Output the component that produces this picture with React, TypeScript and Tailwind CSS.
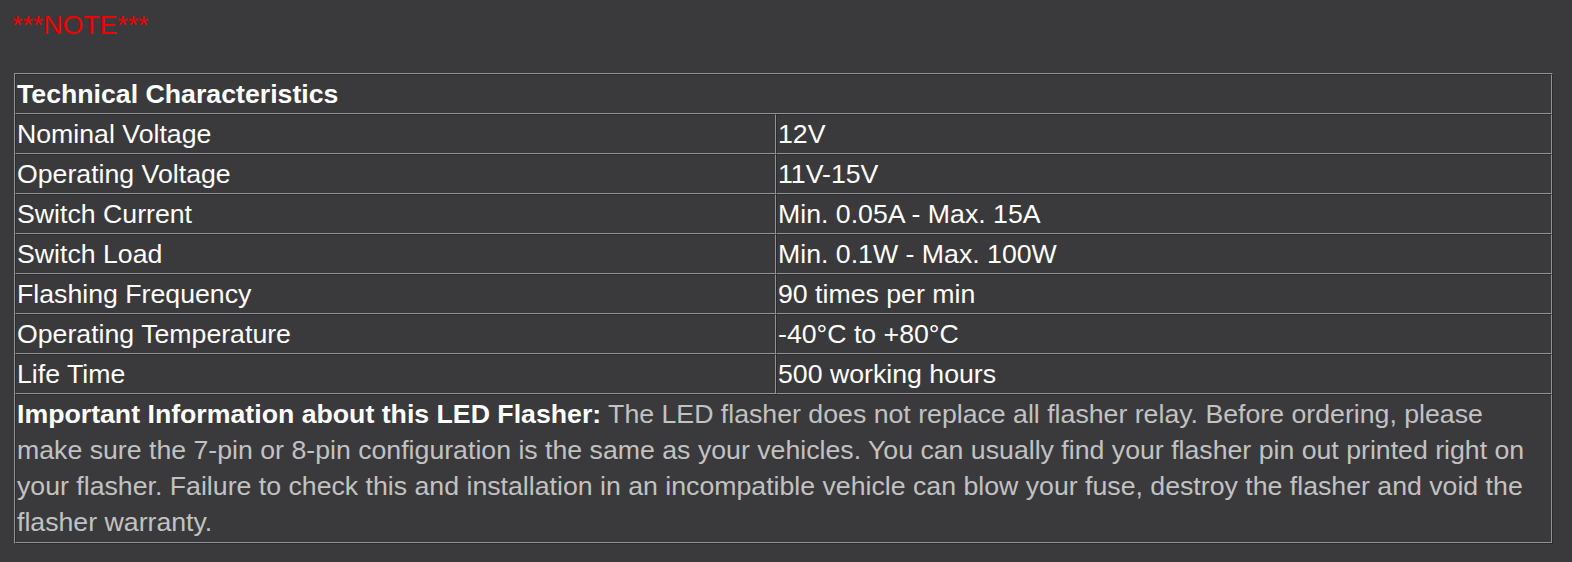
export default function App() {
  const rows: [string, string][] = [
    ["Nominal Voltage", "12V"],
    ["Operating Voltage", "11V-15V"],
    ["Switch Current", "Min. 0.05A - Max. 15A"],
    ["Switch Load", "Min. 0.1W - Max. 100W"],
    ["Flashing Frequency", "90 times per min"],
    ["Operating Temperature", "-40°C to +80°C"],
    ["Life Time", "500 working hours"],
  ]

  // inset cell borders: dark top/left, light bottom/right
  const cell =
    "border border-t-[#2b2b2d] border-l-[#2b2b2d] border-b-[#929292] border-r-[#929292] p-px align-middle"

  return (
    <div
      className="min-h-[562px] bg-[#3a3a3c] pl-[12px] pt-[7px] text-[26.7px] leading-[36px]"
      style={{ fontFamily: '"Liberation Sans", Arial, sans-serif' }}
    >
      <p className="text-[#f00000]">***NOTE***</p>

      <table className="ml-[2px] mt-[30px] w-[1539px] table-fixed border-separate border-spacing-0 border border-t-[#929292] border-l-[#929292] border-b-[#2b2b2d] border-r-[#2b2b2d]">
        <colgroup>
          <col className="w-[761px]" />
          <col />
        </colgroup>
        <tbody>
          <tr>
            <td colSpan={2} className={`${cell} font-bold text-white`}>
              Technical Characteristics
            </td>
          </tr>
          {rows.map(([label, value]) => (
            <tr key={label}>
              <td className={`${cell} text-white`}>{label}</td>
              <td className={`${cell} text-white`}>{value}</td>
            </tr>
          ))}
          <tr>
            <td colSpan={2} className={`${cell} pb-[2px] text-[#c2c2c2]`}>
              <span className="font-bold text-white">Important Information about this LED Flasher:</span> The LED
              flasher does not replace all flasher relay. Before ordering, please make sure the 7-pin or 8-pin
              configuration is the same as your vehicles. You can usually find your flasher pin out printed right on
              your flasher. Failure to check this and installation in an incompatible vehicle can blow your fuse,
              destroy the flasher and void the flasher warranty.
            </td>
          </tr>
        </tbody>
      </table>
    </div>
  )
}
